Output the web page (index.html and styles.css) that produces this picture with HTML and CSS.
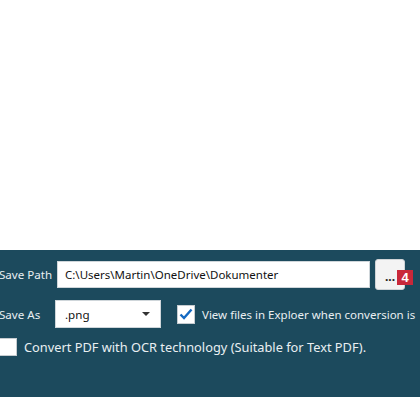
FILE: index.html
```html
<!DOCTYPE html>
<html lang="en">
<head>
    <meta charset="UTF-8">
    <title>Convert Settings</title>
    <link rel="stylesheet" href="styles.css">
</head>
<body>
    <!-- Empty document area -->
    <div class="canvas"></div>

    <!-- Output settings -->
    <div class="settings">
        <div class="row">
            <span class="label">Save Path</span>
            <input class="path" type="text" value="C:\Users\Martin\OneDrive\Dokumenter">
            <div class="browse">
                <button>...</button>
                <span class="badge">4</span>
            </div>
        </div>
        <div class="row row-as">
            <span class="label">Save As</span>
            <div class="select">
                <span>.png</span>
                <span class="arrow"></span>
            </div>
            <label class="check">
                <span class="box">
                    <svg width="14" height="12" viewBox="0 0 14 12"><path d="M1.5 6.5 L5 10 L12.5 1.5" fill="none" stroke="#1469c2" stroke-width="2.4"/></svg>
                </span>
                <span>View files in Exploer when conversion is</span>
            </label>
        </div>
        <div class="row row-ocr">
            <label class="check">
                <span class="box"></span>
                <span>Convert PDF with OCR technology (Suitable for Text PDF).</span>
            </label>
        </div>
    </div>
</body>
</html>
```

FILE: styles.css
```css
* {
    margin: 0;
    padding: 0;
    box-sizing: border-box;
}
html, body {
    width: 420px;
    height: 397px;
    overflow: hidden;
}
body {
    font-family: "Segoe UI", "Noto Sans", sans-serif;
    font-size: 11.6px;
    background-color: #1c4a5d;
}
.canvas {
    height: 250px;
    background-color: #fff;
}
.settings {
    height: 147px;
    padding-top: 9px;
    margin-left: -1px;
    color: #e9eff2;
    white-space: nowrap;
}
.row {
    display: flex;
    align-items: center;
    height: 31px;
}
.row > * {
    flex-shrink: 0;
}
.label {
    width: 58px;
}
.path {
    width: 313px;
    height: 27px;
    border: 1px solid #cfd6da;
    padding: 0 7px;
    font-family: inherit;
    font-size: 11.5px;
    color: #111;
    outline: none;
}
.browse {
    position: relative;
    margin-left: 5px;
}
.browse button {
    width: 30px;
    height: 31px;
    border: 1px solid #cfd3d6;
    border-radius: 3px;
    background-color: #f3f3f3;
    color: #222;
    font-family: inherit;
    font-size: 12px;
    font-weight: bold;
    padding-top: 4px;
}
.badge {
    position: absolute;
    left: 22px;
    top: 11px;
    width: 16px;
    height: 15px;
    background-color: #c9283a;
    color: #fff;
    font-family: "Liberation Sans", Arial, sans-serif;
    font-weight: bold;
    font-size: 13px;
    line-height: 15px;
    text-align: center;
}
.row-as {
    margin-top: 10px;
    height: 28px;
}
.row-as .label {
    width: 56px;
}
.select {
    display: flex;
    align-items: center;
    justify-content: space-between;
    width: 106px;
    height: 28px;
    border: 1px solid #cfd6da;
    background-color: #fff;
    color: #111;
    padding: 0 10px 0 9px;
}
.arrow {
    width: 0;
    height: 0;
    border-left: 4px solid transparent;
    border-right: 4px solid transparent;
    border-top: 4px solid #333;
}
.check {
    display: flex;
    align-items: center;
    gap: 7px;
    font-size: 12.8px;
}
.row-as .check {
    margin-left: 16px;
    font-size: 11.5px;
}
.box {
    display: flex;
    align-items: center;
    justify-content: center;
    width: 18px;
    height: 19px;
    background-color: #fff;
    border: 1px solid #c6ccd0;
}
.row-ocr {
    margin-top: 10px;
    height: 18px;
}
.row-ocr .box {
    height: 18px;
}
```
